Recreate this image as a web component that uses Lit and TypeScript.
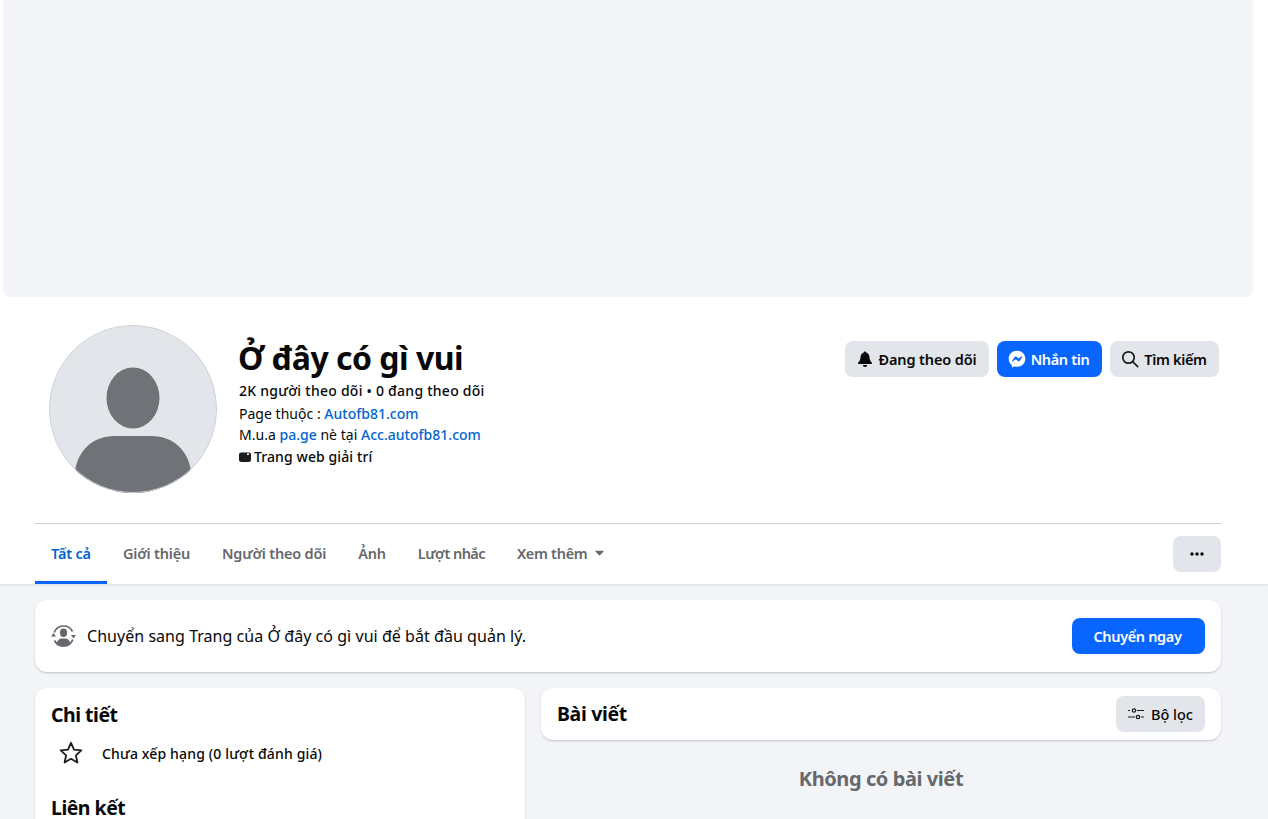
import {LitElement, html, css} from 'lit';
import {customElement} from 'lit/decorators.js';

@customElement('app-root')
export class AppRoot extends LitElement {
  static override styles = css`
    :host {
      display: block;
      height: 819px;
      overflow: hidden;
      background: #f2f4f7;
      color: #080809;
      font-family: 'Noto Sans', 'Open Sans', sans-serif;
    }
    svg {
      display: block;
      flex: none;
    }
    a {
      color: #0064d1;
      font-weight: 500;
    }
    .top {
      background: #fff;
      height: 584px;
      box-shadow: 0 1px 2px rgba(0, 0, 0, 0.1);
      position: relative;
    }
    .cover {
      height: 297px;
      margin: 0 15px 0 3px;
      background: #f2f4f7;
      border-radius: 0 0 8px 8px;
    }
    .wrap {
      margin: 0 47px 0 35px;
    }
    .head {
      display: flex;
      height: 227px;
      padding: 28px 2px 0 14px;
      box-sizing: border-box;
      border-bottom: 1px solid #ced0d4;
    }
    .avatar {
      width: 168px;
      height: 168px;
      border-radius: 50%;
      flex: none;
    }
    .info {
      margin-left: 22px;
      flex: 1;
      padding-top: 12px;
    }
    h1 {
      margin: 0 0 0 -1px;
      font-size: 32px;
      line-height: 41px;
      font-weight: 700;
      letter-spacing: -0.5px;
    }
    .stats {
      font-size: 14px;
      line-height: 20px;
      font-weight: 500;
      margin-top: 3px;
      letter-spacing: 0.25px;
    }
    .bio {
      font-size: 14px;
      line-height: 21px;
      margin-top: 2px;
      letter-spacing: 0.02px;
    }
    .cat {
      display: flex;
      align-items: center;
      gap: 3px;
      font-size: 14px;
      line-height: 20px;
      font-weight: 500;
      margin-top: 2px;
      letter-spacing: 0.1px;
    }
    .actions {
      display: flex;
      gap: 8px;
      padding-top: 16px;
      align-items: flex-start;
    }
    .btn {
      height: 36px;
      box-sizing: border-box;
      border-radius: 8px;
      background: #e2e5e9;
      display: flex;
      align-items: center;
      justify-content: center;
      gap: 5px;
      font-size: 14.5px;
      font-weight: 600;
      letter-spacing: -0.35px;
      white-space: nowrap;
    }
    .btn.blue {
      background: #0866ff;
      color: #fff;
    }
    .follow {
      width: 144px;
      letter-spacing: -0.12px;
    }
    .msg {
      width: 105px;
      padding-right: 2px;
    }
    .search {
      width: 109px;
      padding-right: 1px;
    }
    .tabs {
      display: flex;
      height: 60px;
      align-items: stretch;
      position: relative;
    }
    .tab {
      display: flex;
      align-items: center;
      gap: 8px;
      padding: 1px 16px 0;
      font-size: 14.5px;
      font-weight: 600;
      letter-spacing: -0.2px;
      color: #65686c;
      box-sizing: border-box;
      border-bottom: 3px solid transparent;
    }
    .tab.active {
      color: #0064d1;
      border-bottom-color: #0866ff;
      width: 72px;
      white-space: nowrap;
    }
    .tab.tight {
      letter-spacing: -0.6px;
    }
    .tab.wide {
      letter-spacing: -0.3px;
    }
    .more {
      width: 48px;
      margin: 12px 0 12px auto;
    }
    .body {
      padding: 16px 47px 0 35px;
    }
    .card {
      background: #fff;
      border-radius: 12px;
      box-shadow: 0 1px 2px rgba(0, 0, 0, 0.2);
    }
    .switch {
      height: 72px;
      display: flex;
      align-items: center;
      padding: 0 16px;
      font-size: 16px;
      letter-spacing: 0.04px;
    }
    .switch span {
      margin-left: 11px;
      flex: 1;
    }
    .go {
      width: 133px;
      padding-right: 2px;
    }
    .cols {
      display: flex;
      gap: 16px;
      margin-top: 16px;
      align-items: flex-start;
    }
    .left {
      width: 490px;
      height: 200px;
      padding: 15px 16px;
      box-sizing: border-box;
      flex: none;
    }
    .left h2 {
      letter-spacing: -0.5px;
    }
    h2 {
      margin: 0;
      font-size: 19.5px;
      line-height: 24px;
      font-weight: 700;
      letter-spacing: -0.35px;
    }
    .rate {
      display: flex;
      align-items: center;
      font-size: 14px;
      font-weight: 500;
      letter-spacing: 0.15px;
      height: 36px;
      margin: 8px 0 25px 8px;
      gap: 19px;
    }
    .right {
      flex: 1;
    }
    .posts {
      height: 52px;
      display: flex;
      align-items: center;
      justify-content: space-between;
      padding: 0 16px;
    }
    .filter {
      width: 89px;
      font-weight: 500;
      letter-spacing: 0;
      gap: 7px;
    }
    .empty {
      margin-top: 25px;
      text-align: center;
      font-size: 20px;
      line-height: 28px;
      font-weight: 700;
      letter-spacing: -0.42px;
      color: #65686c;
    }
  `;

  override render() {
    return html`
      <div class="top">
        <div class="cover"></div>
        <div class="wrap">
          <div class="head">
            <svg class="avatar" viewBox="0 0 168 168">
              <circle cx="84" cy="84" r="84" fill="#e2e5e9" />
              <ellipse cx="84" cy="73" rx="26.5" ry="30.5" fill="#6f7276" />
              <path
                d="M26 146c3-20 17-35 40-35h36c23 0 37 15 40 35a84 84 0 0 1-116 0Z"
                fill="#6f7276"
              />
              <circle cx="84" cy="84" r="83.5" fill="none" stroke="#ced0d4" />
            </svg>
            <div class="info">
              <h1>Ở đây có gì vui</h1>
              <div class="stats">2K người theo dõi • 0 đang theo dõi</div>
              <div class="bio">
                Page thuộc : <a>Autofb81.com</a><br />
                M.u.a <a>pa.ge</a> nè tại <a>Acc.autofb81.com</a>
              </div>
              <div class="cat">
                <svg width="12" height="12" viewBox="0 0 12 12">
                  <path
                    d="M2 1.5h8A2 2 0 0 1 12 3.5v5A2.5 2.5 0 0 1 9.500 11h-7A2.500 2.500 0 0 1 0 8.500v-5A2 2 0 0 1 2 1.500Z"
                    fill="#1c1c1e"
                  />
                  <rect x="8" y="2.500" width="2" height="1.500" fill="#fff" />
                </svg>
                Trang web giải trí
              </div>
            </div>
            <div class="actions">
              <div class="btn follow">
                <svg width="16" height="16" viewBox="0 0 16 16" fill="#080809">
                  <path
                    d="M8 0.500c-.7 0-1.200.5-1.200 1.100C4.800 2.200 3.700 4 3.500 6.200c-.2 2.500-.8 4-2.300 5.400-.5.500-.2 1.400.6 1.400h12.400c.8 0 1.100-.9.600-1.400-1.500-1.400-2.100-2.900-2.300-5.400C12.300 4 11.200 2.200 9.200 1.600 9.200 1 8.700.5 8 .5Z"
                  />
                  <path d="M5.800 14h4.400a2.200 2 0 0 1-4.400 0Z" />
                </svg>
                Đang theo dõi
              </div>
              <div class="btn msg blue">
                <svg width="18" height="18" viewBox="0 0 18 18">
                  <path
                    fill="#fff"
                    d="M9 .8C4.300.8.700 4.200.700 8.700c0 2.400 1 4.400 2.600 5.800.3.200.4.400.4.700l.1 1.400c0 .5.500.8 1 .6l1.600-.7c.2-.1.400-.1.600-.1.700.2 1.400.3 2 .3 4.700 0 8.300-3.400 8.300-8S13.700.8 9 .8Z"
                  />
                  <path
                    fill="#0866ff"
                    d="m4.100 11 2.500-3.900c.4-.6 1.200-.8 1.800-.3l2 1.500c.2.100.4.100.6 0l2.700-2c.4-.3.800.2.600.5l-2.500 3.900c-.4.600-1.200.8-1.800.3l-2-1.500c-.2-.1-.4-.1-.6 0l-2.700 2c-.4.300-.8-.2-.6-.5Z"
                  />
                </svg>
                Nhắn tin
              </div>
              <div class="btn search">
                <svg width="18" height="18" viewBox="0 0 18 18" fill="none" stroke="#1c1c1e" stroke-width="1.700">
                  <circle cx="7.500" cy="7.500" r="5.700" />
                  <path d="m11.700 11.700 5 5" stroke-linecap="round" />
                </svg>
                Tìm kiếm
              </div>
            </div>
          </div>
          <div class="tabs">
            <div class="tab active">Tất cả</div>
            <div class="tab">Giới thiệu</div>
            <div class="tab">Người theo dõi</div>
            <div class="tab">Ảnh</div>
            <div class="tab tight">Lượt nhắc</div>
            <div class="tab wide">
              Xem thêm
              <svg width="9" height="6" viewBox="0 0 10 6"><path d="M.800.500h8.400c.4 0 .6.400.4.700L5.400 5.600a.5.500 0 0 1-.8 0L.400 1.200C.200.900.400.500.800.500Z" fill="#65686c" /></svg>
            </div>
            <div class="btn more">
              <svg width="14" height="4" viewBox="0 0 14 4" fill="#080809">
                <circle cx="2" cy="2" r="1.700" />
                <circle cx="7" cy="2" r="1.700" />
                <circle cx="12" cy="2" r="1.700" />
              </svg>
            </div>
          </div>
        </div>
      </div>
      <div class="body">
        <div class="card switch">
          <svg width="25" height="24" viewBox="0 0 25 24" fill="#65686c">
            <path d="M3.200 8.500A10 10 0 0 1 21.500 7.500" fill="none" stroke="#65686c" stroke-width="1.700" />
            <path d="M3.500 16.500A10 10 0 0 0 21.800 15.500" fill="none" stroke="#65686c" stroke-width="1.700" />
            <path d="M0 12.500h5l-2.500-3.500ZM20 11h5l-2.500 3.500Z" />
            <ellipse cx="12.500" cy="8.800" rx="3.600" ry="4.200" />
            <path d="M5.500 20c.5-3.500 2.600-5.500 5.500-5.500h3c2.900 0 5 2 5.500 5.500a10 10 0 0 1-14 0Z" />
          </svg>
          <span>Chuyển sang Trang của Ở đây có gì vui để bắt đầu quản lý.</span>
          <div class="btn blue go">Chuyển ngay</div>
        </div>
        <div class="cols">
          <div class="card left">
            <h2>Chi tiết</h2>
            <div class="rate">
              <svg width="24" height="24" viewBox="0 0 24 24" fill="none" stroke="#1c1c1e" stroke-width="1.800" stroke-linejoin="round">
                <path d="m12 1.800 3 6.800 7.300.8-5.400 4.900 1.500 7.200-6.400-3.700-6.400 3.700 1.500-7.200-5.400-4.900 7.300-.8Z" />
              </svg>
              Chưa xếp hạng (0 lượt đánh giá)
            </div>
            <h2>Liên kết</h2>
          </div>
          <div class="right">
            <div class="card posts">
              <h2>Bài viết</h2>
              <div class="btn filter">
                <svg width="16" height="16" viewBox="0 0 16 16" fill="none" stroke="#1c1c1e" stroke-width="1.200">
                  <circle cx="6" cy="4.500" r="1.700" />
                  <circle cx="10" cy="11" r="1.700" />
                  <path d="M0 4.500h2M9 4.500h7M0 11h7M13 11h3" />
                </svg>
                Bộ lọc
              </div>
            </div>
            <div class="empty">Không có bài viết</div>
          </div>
        </div>
      </div>
    `;
  }
}

declare global {
  interface HTMLElementTagNameMap {
    'app-root': AppRoot;
  }
}
